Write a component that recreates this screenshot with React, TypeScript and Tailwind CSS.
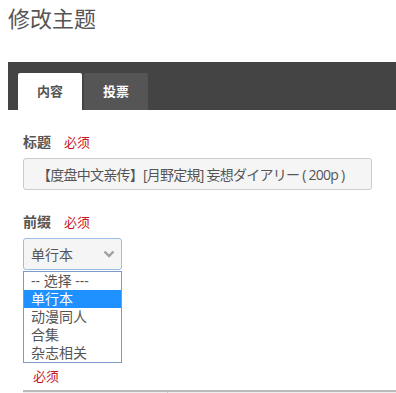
import React from "react";

const FONT = { fontFamily: '"Open Sans", "Noto Sans CJK SC", sans-serif' };

const OPTIONS = ["-- 选择 ---", "单行本", "动漫同人", "合集", "杂志相关"];

function Required({ className = "" }: { className?: string }) {
  return <span className={`text-[13px] text-[#c8141e] ${className}`}>必须</span>;
}

export default function App() {
  return (
    <div className="h-[393px] w-full overflow-hidden bg-white text-[#555]" style={FONT}>
      <h1 className="px-2 pt-[3px] text-[22px] leading-[30px] font-normal text-[#555]">修改主题</h1>

      {/* tabs */}
      <div className="ml-2 mt-[29px] flex h-[48px] items-end gap-[2px] bg-[#444] pl-[10px]">
        <div className="flex h-[37px] w-[64px] items-center justify-center rounded-t-[2px] bg-white text-[13px] font-bold text-[#555]">
          内容
        </div>
        <div className="flex h-[37px] w-[64px] items-center justify-center rounded-t-[2px] bg-[#555] text-[13px] font-bold text-white">
          投票
        </div>
      </div>

      <div className="px-[23px]">
        <div className="mt-[22px] flex items-center gap-[13px] leading-[20px]">
          <span className="text-[14px] font-bold">标题</span>
          <Required />
        </div>
        <div className="mt-[6px] flex h-[32px] w-[349px] items-center overflow-hidden whitespace-nowrap rounded-[3px] border border-[#ccc] bg-[#f5f5f5] px-[13px] text-[14px] tracking-[-0.75px] text-[#555]">
          【度盘中文亲传】[月野定規] 妄想ダイアリー ( 200p )
        </div>

        <div className="mt-[22px] flex items-center gap-[13px] leading-[20px]">
          <span className="text-[14px] font-bold">前缀</span>
          <Required />
        </div>
        <div className="relative mt-[6px] w-[99px]">
          <div className="flex h-[32px] items-center justify-between rounded-[3px] border border-[#9bbbe8] bg-[#f5f5f5] pl-[7px] pr-[6px] text-[14px] text-[#555]">
            <span>单行本</span>
            <svg width="12" height="8" viewBox="0 0 12 8" fill="none">
              <path d="M1.5 1.5 6 6l4.5-4.5" stroke="#a0a0a0" strokeWidth="2.4" />
            </svg>
          </div>
          <ul className="absolute left-0 top-[33px] w-[99px] border border-[#7f99c9] bg-white text-[14px] leading-[18px]">
            {OPTIONS.map((o, i) => (
              <li
                key={o}
                className={`pl-[7px] ${i === 1 ? "bg-[#1e90ff] text-white" : "text-[#555]"}`}
              >
                {o}
              </li>
            ))}
          </ul>
        </div>
        <div className="mt-[96px] pl-[10px] leading-[18px]">
          <Required />
        </div>
      </div>

      <div className="ml-[23px] mt-[5px] flex h-[20px] border-t-2 border-[#bbb] bg-[#eee]">
        <div className="w-[145px] border-r border-[#ccc]" />
        <div className="flex-1" />
      </div>
    </div>
  );
}
